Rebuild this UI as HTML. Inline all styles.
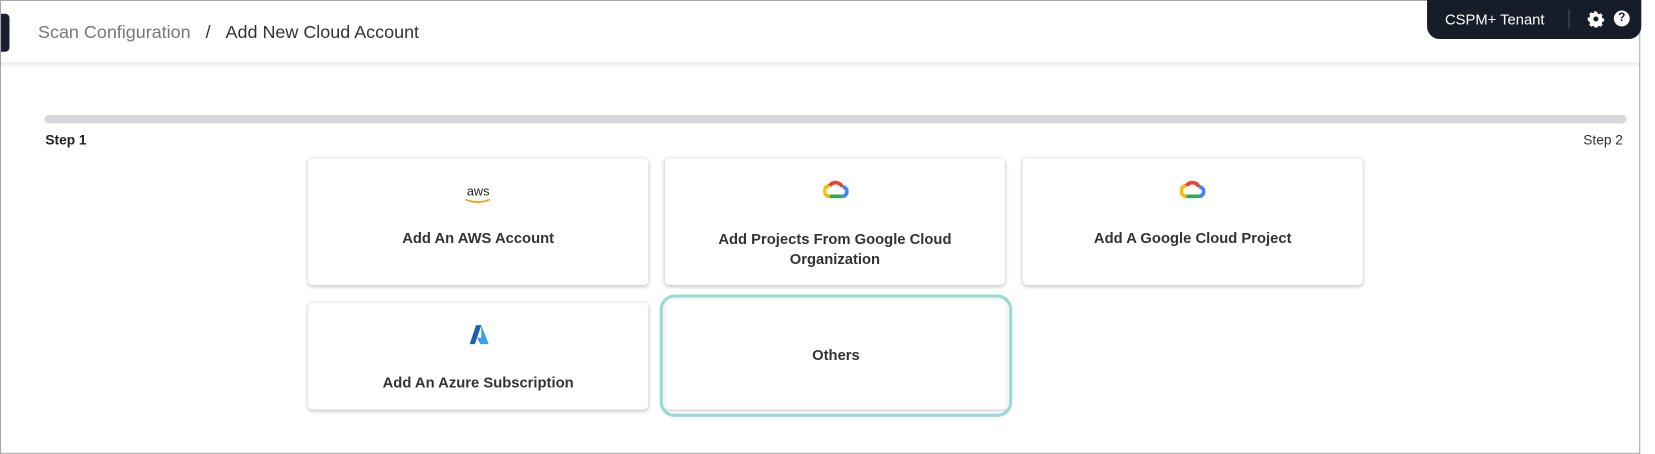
<!DOCTYPE html>
<html><head><style>
*{box-sizing:border-box;margin:0;padding:0}
body{width:1655px;height:454px;background:#fff;font-family:"Liberation Sans",sans-serif;position:relative;overflow:hidden}
#w{position:absolute;left:0;top:0;width:1568px;height:430px;transform:scale(1.0555);transform-origin:0 0}
.frame{position:absolute;left:0;top:0;width:1554px;height:430px;border:1px solid #a8a8a8}
.hdr{position:absolute;left:1px;top:1px;width:1552px;height:59px;background:#fff;box-shadow:0 2px 3px rgba(0,0,0,.08);border-bottom:1px solid #e6e6e6}
.tab{position:absolute;left:0;top:12px;width:8px;height:36px;background:#1a1f2b;border-radius:0 4px 4px 0}
.bc{position:absolute;left:35px;top:20px;font-size:17px;color:#777}
.bc b{font-weight:normal;color:#333}
.ten{position:absolute;left:1352px;top:0;width:203px;height:37px;background:#161d29;border-radius:0 0 12px 12px;color:#fff;font-size:14px}
.card{position:absolute;background:#fff;border-radius:4px;box-shadow:0 1px 4px rgba(0,0,0,.25);text-align:center;font-weight:bold;font-size:14px;color:#333}
.lbl{position:absolute;left:0;right:0}
</style></head><body><div id="w">
<div class="frame"></div>
<div class="hdr"><div class="tab"></div>
<div class="bc">Scan Configuration&nbsp;&nbsp;&nbsp;<span style="color:#333">/</span>&nbsp;&nbsp;&nbsp;<b>Add New Cloud Account</b></div></div>
<div class="ten"><span style="position:absolute;left:17px;top:10px">CSPM+ Tenant</span>
<div style="position:absolute;left:134px;top:9px;width:1px;height:18px;background:#555"></div>
<svg style="position:absolute;left:152px;top:10px" width="16" height="16" viewBox="0 0 16 16"><path d="M8 1l1.3.2.4 1.7 1.3.6 1.5-.9 1.9 1.9-.9 1.5.6 1.3 1.7.4v2.6l-1.7.4-.6 1.3.9 1.5-1.9 1.9-1.5-.9-1.3.6-.4 1.7H6.7l-.4-1.7-1.3-.6-1.5.9-1.9-1.9.9-1.5-.6-1.3L.2 9.3V6.7l1.7-.4.6-1.3-.9-1.5 1.9-1.9 1.5.9 1.3-.6.4-1.7z" fill="#fff"/><circle cx="8" cy="8" r="2.4" fill="#161d29"/></svg>
<div style="position:absolute;left:177px;top:10px;width:15px;height:15px;border-radius:50%;background:#fff;color:#161d29;font-size:11px;font-weight:bold;text-align:center;line-height:15px">?</div></div>
<div style="position:absolute;left:42px;top:109px;width:1499px;height:8px;background:#d8d8dc;border-radius:4px"></div>
<div style="position:absolute;left:43px;top:125px;font-size:13px;font-weight:bold;color:#222">Step 1</div>
<div style="position:absolute;left:1500px;top:125px;font-size:13px;color:#333">Step 2</div>

<div class="card" style="left:292px;top:150px;width:322px;height:120px">
<div style="position:absolute;left:0;right:0;top:24px;font-size:12px;font-weight:normal;color:#222">aws</div>
<svg style="position:absolute;left:148px;top:38px" width="26" height="6"><path d="M1 1Q13 6 24 1" stroke="#f90" stroke-width="1.6" fill="none"/></svg>
<div class="lbl" style="top:67px">Add An AWS Account</div></div>

<div class="card" style="left:630px;top:150px;width:322px;height:120px">
<svg style="position:absolute;left:150px;top:20px" width="24" height="20" viewBox="0 0 24 20"><path d="M6 16A5 5 0 0 1 6 6" stroke="#fbbc04" stroke-width="3.5" fill="none"/><path d="M6 6A7 7 0 0 1 18 7" stroke="#ea4335" stroke-width="3.5" fill="none"/><path d="M18 7A4.5 4.5 0 0 1 18 16" stroke="#4285f4" stroke-width="3.5" fill="none"/><path d="M6 16H18" stroke="#34a853" stroke-width="3.5"/></svg>
<div class="lbl" style="top:67px;line-height:19px">Add Projects From Google Cloud<br>Organization</div></div>

<div class="card" style="left:969px;top:150px;width:322px;height:120px">
<svg style="position:absolute;left:149px;top:20px" width="24" height="20" viewBox="0 0 24 20"><path d="M6 16A5 5 0 0 1 6 6" stroke="#fbbc04" stroke-width="3.5" fill="none"/><path d="M6 6A7 7 0 0 1 18 7" stroke="#ea4335" stroke-width="3.5" fill="none"/><path d="M18 7A4.5 4.5 0 0 1 18 16" stroke="#4285f4" stroke-width="3.5" fill="none"/><path d="M6 16H18" stroke="#34a853" stroke-width="3.5"/></svg>
<div class="lbl" style="top:67px">Add A Google Cloud Project</div></div>

<div class="card" style="left:292px;top:287px;width:322px;height:101px">
<svg style="position:absolute;left:152px;top:20px" width="20" height="20" viewBox="0 0 20 20"><path d="M7 1H12L6 19H1z" fill="#1f5fb0"/><path d="M12 1L19 19H11L8 13H12z" fill="#38a0e8"/></svg>
<div class="lbl" style="top:67px">Add An Azure Subscription</div></div>

<div style="position:absolute;left:625px;top:279px;width:334px;height:116px;border:3px solid #98dad6;border-radius:14px"></div>
<div class="card" style="left:631px;top:284px;width:322px;height:104px;box-shadow:0 1px 3px rgba(0,0,0,.2)">
<div class="lbl" style="top:44px">Others</div></div>
</div></body></html>
